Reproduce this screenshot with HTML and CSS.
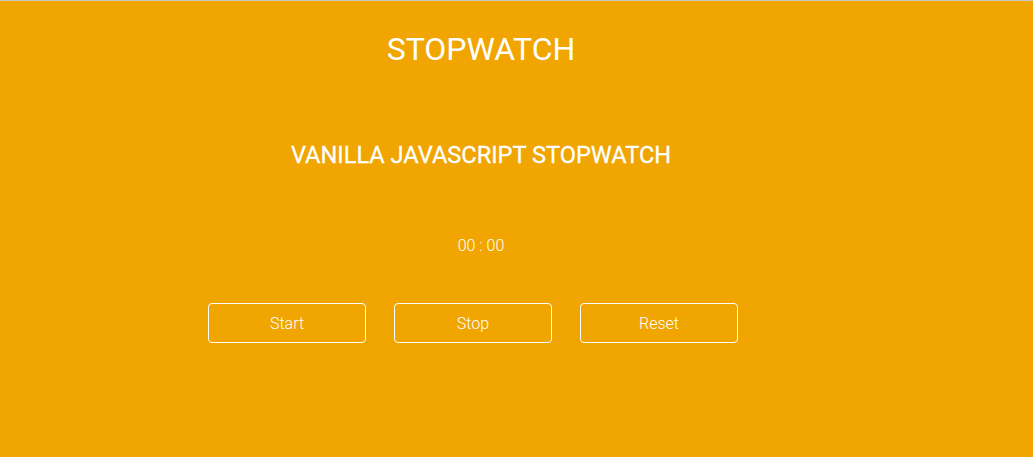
FILE: index.html
```html
<!DOCTYPE html>
<html>
<head>
<meta charset="utf-8">
<link rel="stylesheet" href="styles.css">
</head>
<body>
<div class="page">
  <h1 class="title">STOPWATCH</h1>
  <h2 class="subtitle">VANILLA JAVASCRIPT STOPWATCH</h2>
  <p class="time">00 : 00</p>
  <div class="buttons">
    <button class="btn">Start</button>
    <button class="btn">Stop</button>
    <button class="btn">Reset</button>
  </div>
</div>
</body>
</html>
```
FILE: styles.css
```css
html, body {
  margin: 0;
  padding: 0;
  height: 100%;
}
body {
  background: #f0a500;
  border-top: 1px solid #c8c8c8;
  box-sizing: border-box;
  font-family: Roboto, "Liberation Sans", sans-serif;
  color: #fff;
}
.page {
  width: 962px;
  display: flex;
  flex-direction: column;
  align-items: center;
}
.title {
  margin: 28px 0 0;
  font-size: 32px;
  font-weight: 400;
  line-height: 40px;
}
.subtitle {
  margin: 71px 0 0;
  font-size: 23.6px;
  font-weight: 400;
  line-height: 30px;
  -webkit-text-stroke: 0.3px #fff;
}
.time {
  margin: 66px 0 0;
  font-size: 16px;
  font-weight: 300;
  line-height: 20px;
}
.buttons {
  align-self: flex-start;
  margin: 47px 0 0 208px;
  display: flex;
  gap: 28px;
}
.btn {
  width: 158px;
  height: 40px;
  background: transparent;
  border: 1px solid #fff;
  border-radius: 4px;
  color: #fff;
  font-family: Roboto, "Liberation Sans", sans-serif;
  font-size: 16px;
  font-weight: 300;
  cursor: pointer;
}
```
